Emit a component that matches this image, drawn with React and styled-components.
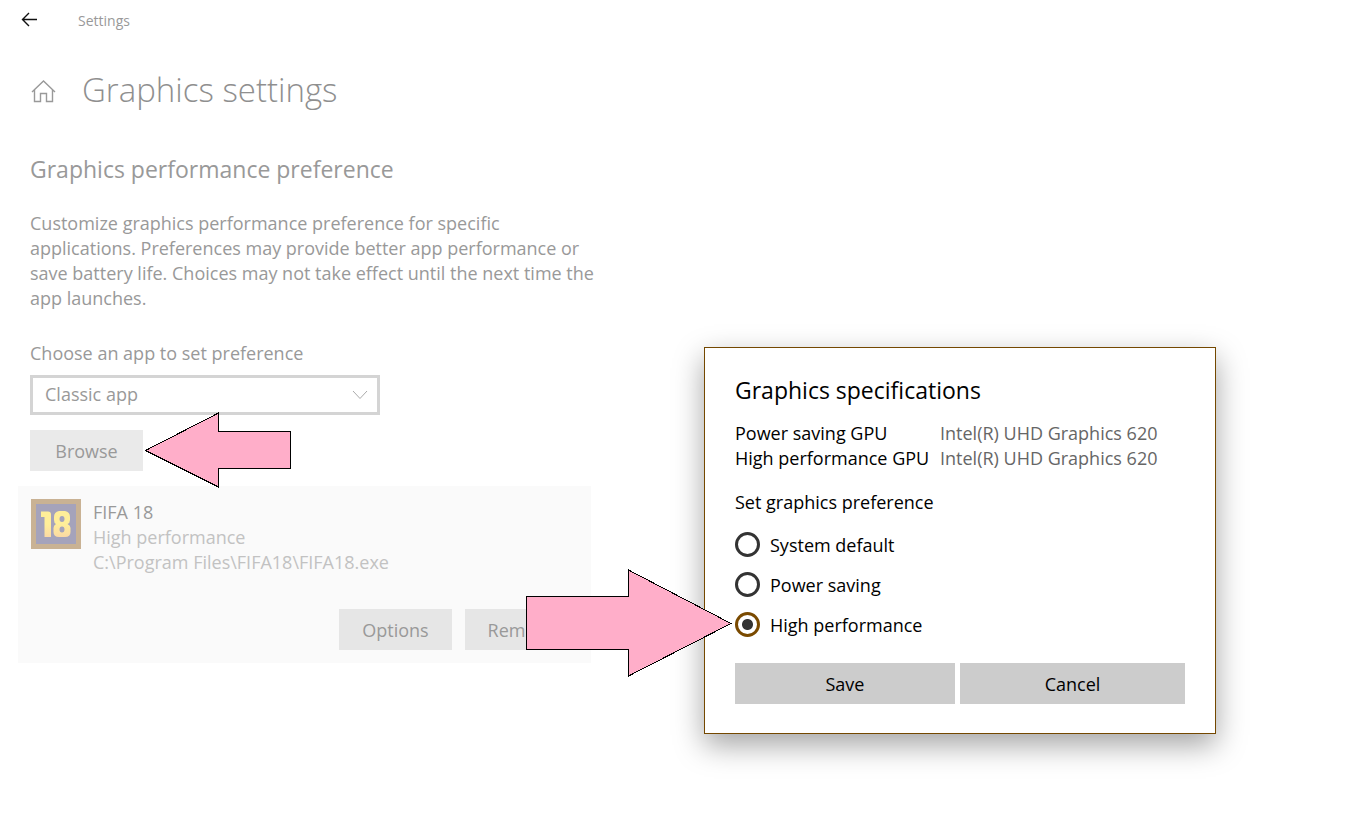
import React, { useState } from "react";
import styled, { createGlobalStyle } from "styled-components";

const GlobalStyle = createGlobalStyle`
    * {
        box-sizing: border-box;
    }
    body {
        margin: 0;
        background: #ffffff;
        color: #999999;
        font-family: "Open Sans", "Noto Sans", sans-serif;
        font-size: 18px;
        line-height: 25px;
    }
    button, select, input {
        margin: 0;
        font: inherit;
        color: inherit;
    }
`;

const Page = styled.div`
    position: relative;
    min-height: 100vh;
`;

const TopBar = styled.header`
    display: flex;
    align-items: center;
    gap: 40px;
    height: 40px;
    padding-left: 21px;
`;

const BackBtn = styled.button`
    display: flex;
    padding: 0;
    border: none;
    background: none;
    cursor: pointer;
`;

const AppName = styled.span`
    font-size: 14px;
`;

const TitleRow = styled.div`
    display: flex;
    align-items: center;
    gap: 25px;
    padding: 25px 30px 0;
`;

const Title = styled.h1`
    margin: 0;
    color: #8f8f8f;
    font-size: 33px;
    font-weight: 300;
    line-height: 50px;
`;

const Content = styled.main`
    display: flex;
    flex-direction: column;
    max-width: 608px;
    padding: 39px 0 0 18px;
`;

const Section = styled.section`
    display: flex;
    flex-direction: column;
    align-items: flex-start;
    padding-left: 12px;
`;

const Heading = styled.h2`
    margin: 0;
    font-size: 23px;
    font-weight: 400;
    line-height: 30px;
`;

const Description = styled.p`
    margin: 27px 0 30px;
`;

const SelectBox = styled.div`
    position: relative;
    width: 350px;
    margin: 9px 0 15px;
`;

const Select = styled.select`
    width: 100%;
    height: 40px;
    padding: 0 12px 2px;
    border: 3px solid #d4d4d4;
    border-radius: 0;
    background: #ffffff;
    appearance: none;
`;

const Chevron = styled.svg`
    position: absolute;
    top: 15px;
    right: 12px;
    pointer-events: none;
`;

const BtnAnchor = styled.div`
    position: relative;
`;

const Button = styled.button`
    height: 41px;
    padding: 2px 0 0;
    border: none;
    background: #cccccc;
    cursor: pointer;
`;

const GreyBtn = styled(Button)`
    width: 113px;
    background: ${props => props.$onCard ? "#e6e6e6" : "#eaeaea"};
`;

const AppCard = styled.article`
    max-width: 573px;
    margin-top: 15px;
    padding: 13px;
    background: #fafafa;
`;

const AppRow = styled.div`
    display: flex;
    gap: 12px;
`;

const AppInfo = styled.div`
    padding-top: 1px;
    color: #c2c2c2;
`;

const AppTitle = styled.div`
    color: #999999;
`;

const CardActions = styled.div`
    display: flex;
    justify-content: flex-end;
    gap: 13px;
    margin-top: 34px;
`;

const Dialog = styled.form`
    position: absolute;
    top: 347px;
    left: 704px;
    width: 512px;
    padding: 27px 30px 29px;
    border: 1px solid #744800;
    background: #ffffff;
    color: #000000;
    box-shadow: 0 11px 28px rgba(0, 0, 0, 0.36);
`;

const DialogTitle = styled(Heading)`
    margin-bottom: 16px;
`;

const GpuList = styled.dl`
    display: grid;
    grid-template-columns: 205px 1fr;
    margin: 0 0 19px;
`;

const GpuLabel = styled.dt`
    white-space: nowrap;
`;

const GpuName = styled.dd`
    margin: 0;
    color: #666666;
`;

const RadioGroup = styled.fieldset`
    display: flex;
    flex-direction: column;
    gap: 13px;
    margin: 0 0 24px;
    padding: 0;
    border: none;
`;

const Legend = styled.legend`
    margin-bottom: 17px;
    padding: 0;
`;

const RadioRow = styled.label`
    position: relative;
    display: flex;
    gap: 10px;
    align-items: flex-start;
    line-height: 27px;
`;

const Radio = styled.input`
    width: 25px;
    height: 25px;
    border: 3px solid #333333;
    border-radius: 50%;
    appearance: none;
    &:checked {
        border-color: #7a4a00;
        background: radial-gradient(circle, #333333 5px, transparent 6px);
    }
`;

const DialogActions = styled.div`
    display: grid;
    grid-template-columns: 220px 225px;
    gap: 5px;
`;

const Arrow = styled.svg`
    position: absolute;
    z-index: 2;
    fill: #ffaec9;
    stroke: #000000;
    pointer-events: none;
`;

const LeftArrow = styled(Arrow)`
    top: -18px;
    left: 115px;
`;

const RightArrow = styled(Arrow)`
    top: -43px;
    right: calc(100% + 3px);
`;

const preferences = ["System default", "Power saving", "High performance"];

const BackIcon = () => (
    <svg width="17" height="16" viewBox="0 0 17 16" fill="none" stroke="#111111" strokeWidth="1.4">
        <path d="M1.5 7.5H16M8 1L1.5 7.5L8 14" />
    </svg>
);

const HomeIcon = () => (
    <svg width="27" height="26" viewBox="0 -1 27 26" fill="none" stroke="#999999" strokeWidth="1.4">
        <path d="M2 14L13.5 3L25 14M4.5 12V23.5H10.5V15.5H16.5V23.5H22.5V12" />
    </svg>
);

const FifaIcon = () => (
    <svg width="50" height="50" viewBox="0 0 50 50">
        <defs>
            <linearGradient id="gold" x1="0" y1="0" x2="0" y2="1">
                <stop offset="0.5" stopColor="#ffee99" />
                <stop offset="1" stopColor="#fbd9a4" />
            </linearGradient>
        </defs>
        <rect width="50" height="50" fill="#c9b294" />
        <rect x="5" y="5" width="40" height="40" fill="#a5a3bb" />
        <path fill="url(#gold)" d="M10 12.5H17Q20 12.5 20 15.5V38H13.5V18H10Z" />
        <path
            fill="url(#gold)"
            fillRule="evenodd"
            d="M28 12H34Q39 13 39 18V21Q39 24 36.5 25Q39.5 26.5 39.5 29V33Q39.5 38 34 38H28Q22.5 38 22.5 33V29Q22.5 26.5 25 25Q23 24 23 21V18Q23 13 28 12ZM31 17A2.500 3 0 1 0 31 23A2.500 3 0 1 0 31 17ZM31 27.5A2.500 3 0 1 0 31 33.5A2.500 3 0 1 0 31 27.5Z"
        />
    </svg>
);

const App = () => {
    const [preference, setPreference] = useState("High performance");

    const onChange = (e) => {
        setPreference(e.target.value);
    }

    const onSubmit = (e) => {
        e.preventDefault();
    }

    return (
        <Page>
            <GlobalStyle />
            <TopBar>
                <BackBtn aria-label="Back"><BackIcon /></BackBtn>
                <AppName>Settings</AppName>
            </TopBar>
            <TitleRow>
                <HomeIcon />
                <Title>Graphics settings</Title>
            </TitleRow>
            <Content>
                <Section>
                    <Heading>Graphics performance preference</Heading>
                    <Description>
                        Customize graphics performance preference for specific applications. Preferences may
                        provide better app performance or save battery life. Choices may not take effect until
                        the next time the app launches.
                    </Description>
                    <label htmlFor="appType">Choose an app to set preference</label>
                    <SelectBox>
                        <Select id="appType">
                            <option>Classic app</option>
                        </Select>
                        <Chevron width="16" height="10" viewBox="0 0 16 10" fill="none" stroke="#aaaaaa">
                            <path d="M1 1L8 8.5L15 1" />
                        </Chevron>
                    </SelectBox>
                    <BtnAnchor>
                        <GreyBtn>Browse</GreyBtn>
                        <LeftArrow width="146" height="76" viewBox="0 0 146 76" shapeRendering="crispEdges">
                            <path d="M0.5 38.5L73.5 1V19.5H145.5V56.5H73.5V75Z" />
                        </LeftArrow>
                    </BtnAnchor>
                </Section>
                <AppCard>
                    <AppRow>
                        <FifaIcon />
                        <AppInfo>
                            <AppTitle>FIFA 18</AppTitle>
                            <div>High performance</div>
                            <div>C:\Program Files\FIFA18\FIFA18.exe</div>
                        </AppInfo>
                    </AppRow>
                    <CardActions>
                        <GreyBtn $onCard>Options</GreyBtn>
                        <GreyBtn $onCard>Remove</GreyBtn>
                    </CardActions>
                </AppCard>
            </Content>
            <Dialog onSubmit={onSubmit}>
                <DialogTitle>Graphics specifications</DialogTitle>
                <GpuList>
                    <GpuLabel>Power saving GPU</GpuLabel>
                    <GpuName>Intel(R) UHD Graphics 620</GpuName>
                    <GpuLabel>High performance GPU</GpuLabel>
                    <GpuName>Intel(R) UHD Graphics 620</GpuName>
                </GpuList>
                <RadioGroup>
                    <Legend>Set graphics preference</Legend>
                    {preferences.map(name => (
                        <RadioRow key={name}>
                            <Radio
                                type="radio"
                                name="preference"
                                value={name}
                                checked={preference === name}
                                onChange={onChange}
                            />
                            {name}
                            {name === "High performance" && (
                                <RightArrow width="206" height="108" viewBox="0 0 206 108" shapeRendering="crispEdges">
                                    <path d="M0.5 27.5H102.5V1L205 54.5L102.5 107V80.5H0.5Z" />
                                </RightArrow>
                            )}
                        </RadioRow>
                    ))}
                </RadioGroup>
                <DialogActions>
                    <Button type="submit">Save</Button>
                    <Button type="button">Cancel</Button>
                </DialogActions>
            </Dialog>
        </Page>
    )
}

export default App;
